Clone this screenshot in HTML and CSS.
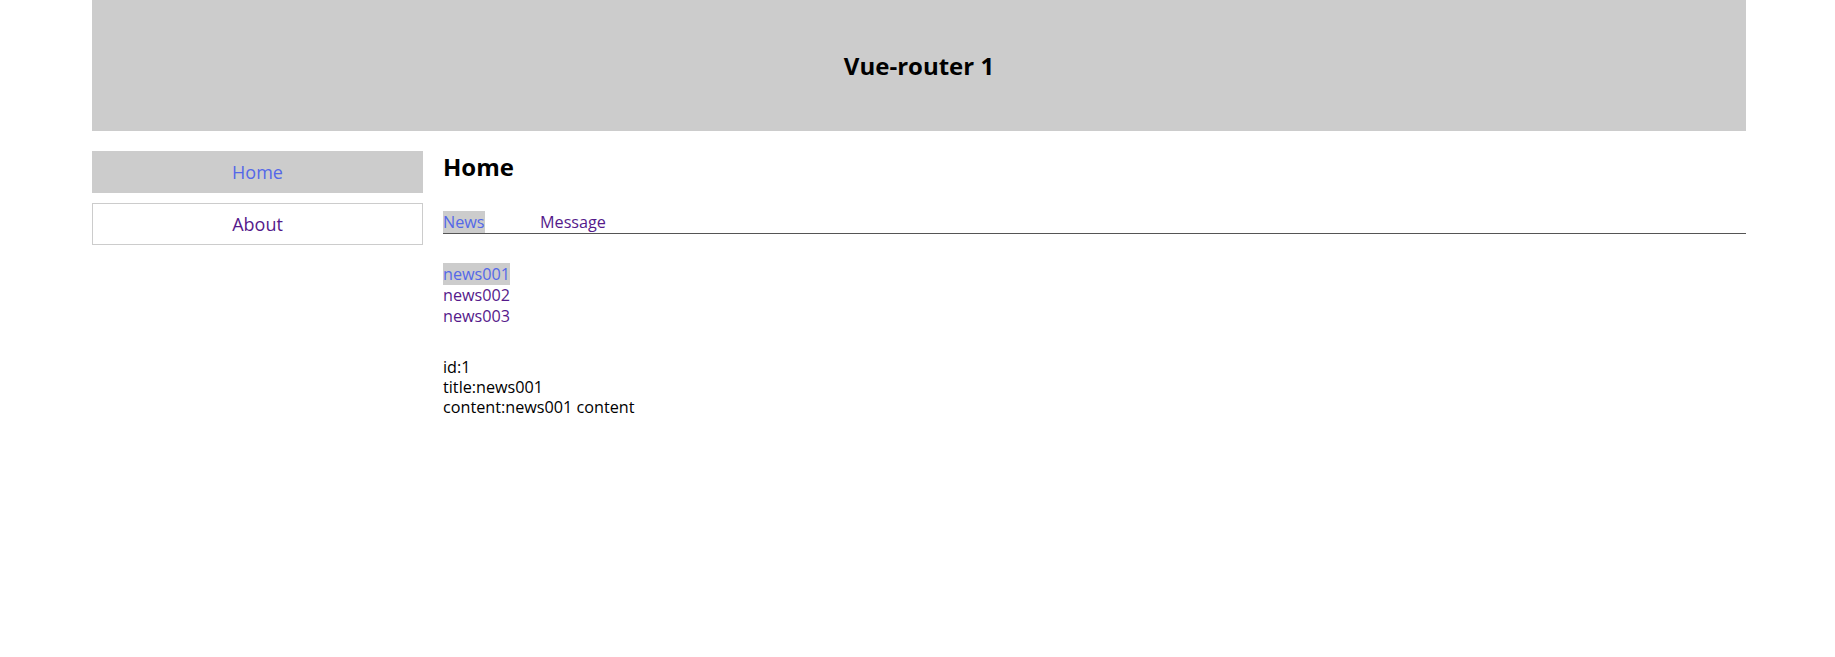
FILE: index.html
```html
<!DOCTYPE html>
<html lang="en">
<head>
<meta charset="utf-8">
<title>Vue-router</title>
<link rel="stylesheet" href="styles.css">
</head>
<body>
<div class="page">
  <header class="banner">
    <h2 class="banner-title">Vue-router 1</h2>
  </header>
  <div class="main">
    <nav class="sidebar">
      <a class="side-link active" href="#">Home</a>
      <a class="side-link" href="#">About</a>
    </nav>
    <section class="content">
      <h2 class="content-title">Home</h2>
      <ul class="tabs">
        <li class="tab"><a class="tab-link active" href="#">News</a></li>
        <li class="tab"><a class="tab-link" href="#">Message</a></li>
      </ul>
      <ul class="news-list">
        <li><a class="news-link active" href="#">news001</a></li>
        <li><a class="news-link" href="#">news002</a></li>
        <li><a class="news-link" href="#">news003</a></li>
      </ul>
      <ul class="detail">
        <li>id:1</li>
        <li>title:news001</li>
        <li>content:news001 content</li>
      </ul>
    </section>
  </div>
</div>
</body>
</html>
```
FILE: styles.css
```css
html, body {
  margin: 0;
  padding: 0;
  background: #fff;
}
body {
  font-family: "Open Sans", "Noto Sans", sans-serif;
  font-size: 16.2px;
  color: #000;
}
.page {
  margin-left: 92px;
  width: 1654px;
}
.banner {
  height: 131px;
  background: #ccc;
  display: flex;
  align-items: center;
  justify-content: center;
}
.banner-title {
  margin: 0;
  font-size: 24px;
  font-weight: 700;
  line-height: 32px;
}
.main {
  display: flex;
  gap: 20px;
  margin-top: 20px;
}
.sidebar {
  width: 331px;
  flex: none;
  display: flex;
  flex-direction: column;
  gap: 10px;
}
.side-link {
  display: block;
  box-sizing: border-box;
  height: 42px;
  line-height: 40px;
  border: 1px solid #ccc;
  text-align: center;
  font-size: 18px;
  color: #551a8b;
  text-decoration: none;
}
.side-link.active {
  background: #ccc;
  border-color: #ccc;
  color: #5468e8;
}
.content {
  flex: 1;
  min-width: 0;
}
.content-title {
  margin: 0;
  font-size: 24px;
  font-weight: 700;
  line-height: 32px;
}
.tabs {
  list-style: none;
  margin: 29px 0 0;
  padding: 0;
  display: flex;
  border-bottom: 1px solid #555;
  line-height: 21px;
}
.tab {
  width: 97px;
}
.tab-link, .news-link {
  color: #551a8b;
  text-decoration: none;
}
.tab-link.active, .news-link.active {
  background: #ccc;
  color: #5468e8;
}
.news-list {
  list-style: none;
  margin: 30px 0 0;
  padding: 0;
  line-height: 21px;
}
.detail {
  list-style: none;
  margin: 30px 0 0;
  padding: 0;
  line-height: 20px;
}
```
